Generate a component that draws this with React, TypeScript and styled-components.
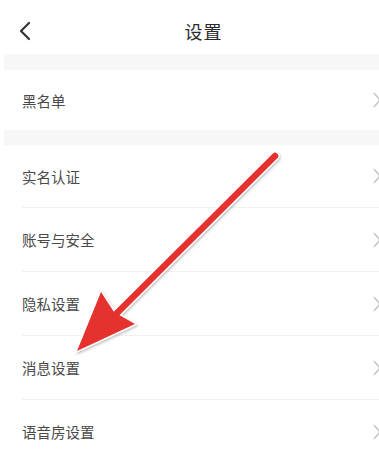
import styled, { createGlobalStyle } from "styled-components";

const GlobalStyle = createGlobalStyle`
  html, body {
    margin: 0;
    padding: 0;
    background: #ffffff;
    overflow: hidden;
  }
  body {
    font-family: "Noto Sans CJK SC", "Noto Sans", sans-serif;
  }
  * {
    box-sizing: border-box;
  }
`;

const Page = styled.div`
  position: relative;
  width: 379px;
  height: 451px;
  background: #ffffff;
  overflow: hidden;
`;

const Header = styled.div`
  height: 54px;
  display: flex;
  align-items: center;
  justify-content: center;
  position: relative;
`;

const BackButton = styled.button`
  position: absolute;
  left: 14px;
  top: 17px;
  width: 22px;
  height: 28px;
  padding: 0;
  border: none;
  background: transparent;
  display: flex;
  align-items: center;
  justify-content: center;
`;

const Title = styled.div`
  font-size: 18px;
  color: #2a2a2a;
  margin-left: 28px;
  margin-top: 8px;
  letter-spacing: 1px;
`;

const Band = styled.div<{ $h: number }>`
  height: ${(p) => p.$h}px;
  background: #f7f7f7;
  margin-left: 4px;
`;

const Group = styled.div`
  display: flex;
  flex-direction: column;
`;

const Row = styled.div<{ $h: number }>`
  height: ${(p) => p.$h}px;
  display: flex;
  align-items: center;
  justify-content: space-between;
  padding-left: 22px;
  & + & {
    border-top: 1px solid #f1f1f1;
    margin-left: 22px;
    padding-left: 0;
  }
`;

const Label = styled.span`
  font-size: 14.5px;
  color: #4a4a4a;
`;

const Chevron = styled.svg`
  flex: none;
  margin-right: -8px;
`;

const ArrowLayer = styled.svg`
  position: absolute;
  left: 0;
  top: 0;
  pointer-events: none;
`;

const blackList = ["黑名单"];
const items = ["实名认证", "账号与安全", "隐私设置", "消息设置", "语音房设置"];

const RowChevron = () => (
  <Chevron width="14" height="16" viewBox="0 0 14 16">
    <polyline points="1,1 7,8 1,15" fill="none" stroke="#c4c4c4" strokeWidth="1.4" />
  </Chevron>
);

const App = () => {
  return (
    <>
      <GlobalStyle />
      <Page>
        <Header>
          <BackButton>
            <svg width="14" height="20" viewBox="0 0 14 20">
              <polyline
                points="11,2 3,10 11,18"
                fill="none"
                stroke="#333333"
                strokeWidth="2.2"
                strokeLinecap="round"
                strokeLinejoin="round"
              />
            </svg>
          </BackButton>
          <Title>设置</Title>
        </Header>
        <Band $h={16} />
        <Group>
          {blackList.map((t) => (
            <Row key={t} $h={60}>
              <Label>{t}</Label>
              <RowChevron />
            </Row>
          ))}
        </Group>
        <Band $h={15} />
        <Group>
          {items.map((t, i) => (
            <Row key={t} $h={i === 0 ? 62 : 64}>
              <Label>{t}</Label>
              <RowChevron />
            </Row>
          ))}
        </Group>

        {/* red annotation arrow */}
        <ArrowLayer width="379" height="451" viewBox="0 0 379 451">
          <defs>
            <filter id="sh" x="-20%" y="-20%" width="140%" height="140%">
              <feDropShadow dx="1" dy="1.5" stdDeviation="1.2" floodColor="#000" floodOpacity="0.25" />
            </filter>
          </defs>
          <g filter="url(#sh)">
            <line x1="275" y1="156" x2="112" y2="318" stroke="#ffffff" strokeWidth="9" strokeLinecap="round" />
            <polygon
              points="101,292 114,312 135,324 77,351"
              fill="#ffffff"
              stroke="#ffffff"
              strokeWidth="3"
              strokeLinejoin="round"
            />
            <line x1="275" y1="156" x2="112" y2="318" stroke="#e5302e" strokeWidth="6.5" strokeLinecap="round" />
            <polygon points="101,292 114,312 135,324 77,351" fill="#e5302e" />
          </g>
        </ArrowLayer>
      </Page>
    </>
  );
};

export default App;
